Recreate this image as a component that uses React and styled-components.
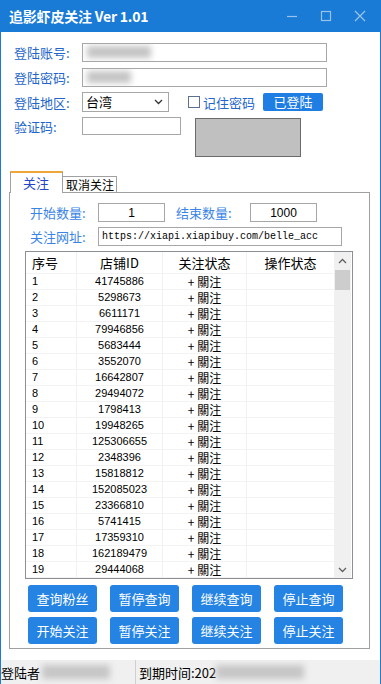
import React from 'react';
import styled, { createGlobalStyle } from 'styled-components';

const Global = createGlobalStyle`
  html, body { margin: 0; padding: 0; background: #fff; }
  body { font-family: "Noto Sans CJK SC", "Noto Sans", sans-serif; }
  * { box-sizing: border-box; }
`;

const Window = styled.div`
  width: 381px;
  height: 684px;
  display: flex;
  flex-direction: column;
  overflow: hidden;
  background: #fff;
`;

const TitleBar = styled.div`
  height: 32px;
  flex: none;
  background: #1a7bd7;
  display: flex;
  align-items: center;
  padding-left: 9px;
  padding-right: 4px;
`;

const Title = styled.div`
  color: #fff;
  font-weight: 700;
  font-size: 14px;
  line-height: 32px;
  letter-spacing: -0.2px;
`;

const Controls = styled.div`
  margin-left: auto;
  display: flex;
  height: 32px;
`;

const Ctl = styled.div`
  width: 34px;
  height: 32px;
  display: flex;
  align-items: center;
  justify-content: center;
`;

const Frame = styled.div`
  flex: 1;
  display: flex;
  flex-direction: column;
  border-left: 1px solid #1a7bd7;
  border-right: 1px solid #1a7bd7;
  min-height: 0;
`;

const Form = styled.div`
  display: flex;
  flex-direction: column;
  gap: 5px;
  padding: 10px 0 0 13px;
`;

const FormRow = styled.div`
  display: flex;
  align-items: ${p => (p.$top ? 'flex-start' : 'center')};
  height: ${p => p.$h || 20}px;
`;

const Label = styled.div`
  width: ${p => p.$w || 68}px;
  flex: none;
  font-size: 13px;
  line-height: 19px;
  color: ${p => (p.$light ? '#3a84e6' : '#2366c9')};
  margin-left: ${p => p.$ml || 0}px;
  white-space: nowrap;
`;

const TextBox = styled.div`
  width: ${p => p.$w}px;
  height: ${p => p.$h || 19}px;
  flex: none;
  border: 1px solid #a7a7a7;
  background: #fff;
  display: flex;
  align-items: center;
  justify-content: ${p => (p.$center ? 'center' : 'flex-start')};
  padding-left: ${p => (p.$center ? 0 : 3)}px;
  overflow: hidden;
  font-family: ${p => (p.$mono ? '"Liberation Mono", monospace' : '"Liberation Sans", sans-serif')};
  font-size: ${p => (p.$mono ? '10px' : '12px')};
  color: #000;
  white-space: nowrap;
`;

const Blur = styled.span`
  display: inline-block;
  width: ${p => p.$w}px;
  height: ${p => p.$h || 12}px;
  background: ${p => p.$c || '#c4c4c4'};
  filter: blur(3px);
  margin-left: ${p => p.$ml || 0}px;
  flex: none;
`;

const Select = styled.div`
  width: 87px;
  height: 20px;
  border: 1px solid #a7a7a7;
  display: flex;
  align-items: center;
  justify-content: space-between;
  padding: 0 5px 0 3px;
  font-size: 13px;
  color: #000;
  line-height: 18px;
`;

const Check = styled.div`
  width: 12px;
  height: 12px;
  border: 1px solid #5d708e;
  background: #fff;
  margin-left: 19px;
  margin-right: 3px;
  flex: none;
`;

const SmallBtn = styled.div`
  width: 60px;
  height: 18px;
  margin-left: 6px;
  background: #1f7ee4;
  color: #fff;
  font-size: 13px;
  line-height: 18px;
  text-align: center;
  border-radius: 2px;
`;

const Captcha = styled.div`
  width: 106px;
  height: 39px;
  margin: 1px 0 0 14px;
  background: #c0c0c0;
  border: 1px solid #6b6b6b;
  flex: none;
`;

const TabStrip = styled.div`
  display: flex;
  align-items: flex-end;
  padding-left: 9px;
  margin-top: 13px;
  height: 22px;
  flex: none;
`;

const Tab = styled.div`
  position: relative;
  z-index: ${p => (p.$active ? 2 : 1)};
  width: ${p => p.$w}px;
  height: ${p => (p.$active ? 22 : 17)}px;
  margin-bottom: -1px;
  background: #fff;
  border: 1px solid #a0a0a0;
  border-top: ${p => (p.$active ? '2px solid #f0a73a' : '1px solid #a0a0a0')};
  border-bottom: ${p => (p.$active ? 'none' : '1px solid #a0a0a0')};
  border-left: ${p => (p.$active ? '1px solid #a0a0a0' : 'none')};
  font-size: ${p => (p.$active ? 13 : 12)}px;
  line-height: ${p => (p.$active ? 19 : 15)}px;
  color: ${p => (p.$active ? '#2545c8' : '#000')};
  padding-left: ${p => (p.$active ? 12 : 3)}px;
  white-space: nowrap;
  overflow: hidden;
`;

const Panel = styled.div`
  flex: 1;
  margin: 0 10px 0 8px;
  border: 1px solid #a0a0a0;
  padding: 10px 15px 0 15px;
  display: flex;
  flex-direction: column;
  min-height: 0;
`;

const ParamRow = styled.div`
  display: flex;
  align-items: center;
  height: 19px;
  margin-left: 5px;
  margin-top: ${p => p.$mt || 0}px;
`;

const TableBox = styled.div`
  margin-top: 5px;
  width: 328px;
  height: 328px;
  border: 1px solid #8c8f96;
  display: flex;
  overflow: hidden;
  flex: none;
`;

const Grid = styled.div`
  flex: 1;
  display: grid;
  grid-template-columns: 51px 86px 84px 88px;
  grid-auto-rows: 16px;
  grid-template-rows: 22px;
  align-content: start;
  overflow: hidden;
`;

const Cell = styled.div`
  border-right: 1px solid #f1f1f1;
  border-bottom: 1px solid #f3f3f3;
  display: flex;
  align-items: center;
  justify-content: ${p => (p.$left ? 'flex-start' : 'center')};
  padding-left: ${p => (p.$left ? 6 : 0)}px;
  font-family: ${p => (p.$num ? '"Liberation Sans", sans-serif' : '"Noto Sans CJK SC", sans-serif')};
  font-size: ${p => (p.$head ? 13 : p.$num ? 11 : 12)}px;
  color: #000;
  white-space: nowrap;
  line-height: 15px;
  overflow: hidden;
`;

const ScrollBar = styled.div`
  width: 17px;
  flex: none;
  background: #f0f0f0;
  display: flex;
  flex-direction: column;
  margin-right: 1px;
`;

const Arrow = styled.div`
  height: 17px;
  display: flex;
  align-items: center;
  justify-content: center;
  flex: none;
`;

const Thumb = styled.div`
  height: 20px;
  margin: 1px 1px 0;
  background: #cdcdcd;
  flex: none;
`;

const Track = styled.div`
  flex: 1;
`;

const BtnGrid = styled.div`
  display: grid;
  grid-template-columns: repeat(4, 69px);
  grid-auto-rows: 27px;
  column-gap: 13px;
  row-gap: 5px;
  margin: 6px 0 0 3px;
`;

const Btn = styled.div`
  background: #2483e3;
  color: #fff;
  border-radius: 3px;
  font-size: 13px;
  display: flex;
  align-items: center;
  justify-content: center;
`;

const StatusBar = styled.div`
  height: 24px;
  flex: none;
  margin-top: 11px;
  background: #f0f0f0;
  display: flex;
  align-items: center;
  font-size: 13px;
  color: #000;
`;

const StatusItem = styled.div`
  width: ${p => p.$w}px;
  height: 24px;
  display: flex;
  align-items: center;
  padding-left: ${p => p.$pl || 0}px;
  border-right: ${p => (p.$sep ? '1px solid #cfcfcf' : 'none')};
  white-space: nowrap;
  flex: none;
`;

const rows = [
  [1, 41745886], [2, 5298673], [3, 6611171], [4, 79946856], [5, 5683444],
  [6, 3552070], [7, 16642807], [8, 29494072], [9, 1798413], [10, 19948265],
  [11, 125306655], [12, 2348396], [13, 15818812], [14, 152085023], [15, 23366810],
  [16, 5741415], [17, 17359310], [18, 162189479], [19, 29444068],
];

const ctlColor = 'rgba(255,255,255,0.55)';

export default function App() {
  return (
    <>
      <Global />
      <Window>
        <TitleBar>
          <Title>追影虾皮关注 Ver 1.01</Title>
          <Controls>
            <Ctl>
              <svg width="12" height="12" viewBox="0 0 12 12"><path d="M1 6.5h10" stroke={ctlColor} strokeWidth="1.2" /></svg>
            </Ctl>
            <Ctl>
              <svg width="12" height="12" viewBox="0 0 12 12"><rect x="1.5" y="1.5" width="9" height="9" fill="none" stroke={ctlColor} strokeWidth="1.2" /></svg>
            </Ctl>
            <Ctl>
              <svg width="12" height="12" viewBox="0 0 12 12"><path d="M1 1L11 11M11 1L1 11" stroke={ctlColor} strokeWidth="1.3" /></svg>
            </Ctl>
          </Controls>
        </TitleBar>
        <Frame>
          <Form>
            <FormRow>
              <Label>登陆账号:</Label>
              <TextBox $w={245}><Blur $w={64} $ml={1} /></TextBox>
            </FormRow>
            <FormRow>
              <Label>登陆密码:</Label>
              <TextBox $w={245}><Blur $w={44} $ml={1} /></TextBox>
            </FormRow>
            <FormRow>
              <Label>登陆地区:</Label>
              <Select>
                <span>台湾</span>
                <svg width="9" height="6" viewBox="0 0 9 6"><path d="M1 1l3.5 3.5L8 1" fill="none" stroke="#333" strokeWidth="1.3" /></svg>
              </Select>
              <Check />
              <Label $w={54}>记住密码</Label>
              <SmallBtn>已登陆</SmallBtn>
            </FormRow>
            <FormRow $h={40} $top>
              <Label>验证码:</Label>
              <TextBox $w={99} $h={18} />
              <Captcha />
            </FormRow>
          </Form>
          <TabStrip>
            <Tab $active $w={53}>关注</Tab>
            <Tab $w={54}>取消关注</Tab>
          </TabStrip>
          <Panel>
            <ParamRow>
              <Label $light>开始数量:</Label>
              <TextBox $w={67} $center>1</TextBox>
              <Label $light $w={74} $ml={11}>结束数量:</Label>
              <TextBox $w={67} $center>1000</TextBox>
            </ParamRow>
            <ParamRow $mt={5}>
              <Label $light>关注网址:</Label>
              <TextBox $w={244} $mono>https://xiapi.xiapibuy.com/belle_acc</TextBox>
            </ParamRow>
            <TableBox>
              <Grid>
                <Cell $head $left>序号</Cell>
                <Cell $head>店铺ID</Cell>
                <Cell $head>关注状态</Cell>
                <Cell $head>操作状态</Cell>
                {rows.map(([n, id]) => (
                  <React.Fragment key={n}>
                    <Cell $num $left>{n}</Cell>
                    <Cell $num>{id}</Cell>
                    <Cell>+ 關注</Cell>
                    <Cell />
                  </React.Fragment>
                ))}
              </Grid>
              <ScrollBar>
                <Arrow>
                  <svg width="9" height="6" viewBox="0 0 9 6"><path d="M1 5l3.5-3.5L8 5" fill="none" stroke="#606060" strokeWidth="1.3" /></svg>
                </Arrow>
                <Thumb />
                <Track />
                <Arrow>
                  <svg width="9" height="6" viewBox="0 0 9 6"><path d="M1 1l3.5 3.5L8 1" fill="none" stroke="#606060" strokeWidth="1.3" /></svg>
                </Arrow>
              </ScrollBar>
            </TableBox>
            <BtnGrid>
              <Btn>查询粉丝</Btn>
              <Btn>暂停查询</Btn>
              <Btn>继续查询</Btn>
              <Btn>停止查询</Btn>
              <Btn>开始关注</Btn>
              <Btn>暂停关注</Btn>
              <Btn>继续关注</Btn>
              <Btn>停止关注</Btn>
            </BtnGrid>
          </Panel>
          <StatusBar>
            <StatusItem $w={135} $sep>
              登陆者<Blur $w={68} $h={14} $c="#c6c6c6" $ml={2} />
            </StatusItem>
            <StatusItem $w={240} $pl={3}>
              到期时间:202<Blur $w={88} $h={14} $c="#c6c6c6" />
            </StatusItem>
          </StatusBar>
        </Frame>
      </Window>
    </>
  );
}
